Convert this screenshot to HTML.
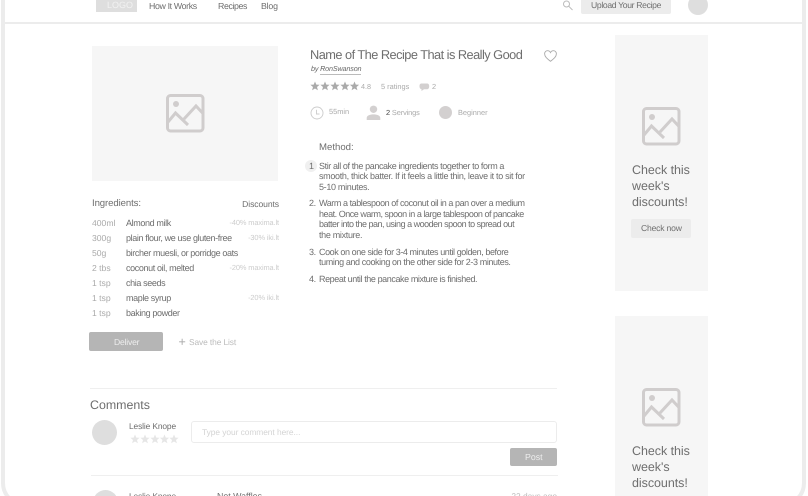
<!DOCTYPE html>
<html><head><meta charset="utf-8">
<style>
html,body{margin:0;padding:0;background:#fff;overflow:hidden;width:808px;height:496px}
#w{width:808px;height:496px;overflow:hidden;position:relative;font-family:"Liberation Sans",sans-serif;color:#666;background:#fff;text-rendering:geometricPrecision}
#f{position:absolute;left:0;top:0;width:808px;height:496px;filter:blur(.3px)}
.a{position:absolute;white-space:nowrap;line-height:1}
.b{position:absolute}
.n{font-size:9px;color:#6e6e6e;letter-spacing:-.38px}
.q{font-size:8.6px;color:#aaa}
.d{font-size:7.4px;color:#ccc;right:529px;letter-spacing:-.1px}
.m{font-size:9px;color:#6e6e6e;letter-spacing:-.32px}
.h{font-size:12.5px;color:#6e6e6e;line-height:16px;letter-spacing:-.05px}
svg{position:absolute;overflow:visible}
</style></head><body>
<div id="w"><div id="f">
<div class="b" style="left:1px;top:-30px;width:797px;height:529px;border:4px solid #ececec;border-radius:24px"></div>
<div class="b" style="left:5px;top:22px;width:798px;height:2px;background:#ececec"></div>

<div class="b" style="left:96px;top:0;width:41px;height:12px;background:#dedede"></div>
<div class="a" style="left:107px;top:1px;font-size:9px;color:#f2f2f2">LOGO</div>
<div class="a" style="left:149px;top:2px;font-size:8.800px;letter-spacing:-.36px;color:#6e6e6e">How It Works</div>
<div class="a" style="left:218px;top:2px;font-size:8.800px;letter-spacing:-.4px;color:#6e6e6e">Recipes</div>
<div class="a" style="left:261px;top:2px;font-size:8.800px;letter-spacing:-.2px;color:#6e6e6e">Blog</div>
<svg style="left:562px;top:0" width="12" height="11" viewBox="0 0 12 11" fill="none" stroke="#bbb" stroke-width="1"><circle cx="4.500" cy="4" r="3"/><path d="M6.800 6.300L10.500 10"/></svg>
<div class="b" style="left:581px;top:0;width:90px;height:14px;background:#ececec;border-radius:0 0 2px 2px"></div>
<div class="a" style="left:591px;top:1px;font-size:8.600px;letter-spacing:-.33px;color:#6e6e6e">Upload Your Recipe</div>
<div class="b" style="left:688px;top:-5px;width:20px;height:20px;border-radius:50%;background:#dedede"></div>

<div class="b" style="left:92px;top:46px;width:186px;height:135px;background:#f6f6f6"></div>
<svg style="left:166px;top:94px" width="39" height="39" viewBox="0 0 39 39" fill="none" stroke="#d0cdcd" stroke-width="3"><rect x="1.500" y="1.500" width="35.500" height="35.500" rx="3"/><circle cx="10" cy="10" r="3" fill="#d0cdcd" stroke="none"/><path d="M2 28L9.500 19L22 31M18 25L30 12L37.500 20"/></svg>

<div class="a" style="left:310px;top:49px;font-size:12.800px;letter-spacing:-.54px;color:#6e6e6e">Name of The Recipe That is Really Good</div>
<svg style="left:544px;top:50px" width="13" height="12" viewBox="0 0 13 12" fill="none" stroke="#aaa" stroke-width="0.9"><path d="M6.500 11.300C3 8.500.6 6.600.6 3.800.6 2 2 .7 3.500.7 4.800.7 5.900 1.400 6.500 2.600 7.100 1.400 8.200.7 9.500.7 11 .7 12.400 2 12.400 3.800 12.400 6.600 10 8.500 6.500 11.300Z"/></svg>
<div class="a" style="left:311px;top:65px;font-size:7.200px;letter-spacing:-.15px;font-style:italic;color:#666">by <span style="border-bottom:1px solid #bbb;padding-bottom:1px">RonSwanson</span></div>

<svg style="left:310px;top:81px" width="50" height="10" viewBox="0 0 50 10" fill="#aaa">
<polygon points="5,.5 6.300,3.600 9.600,3.800 7,6 7.900,9.300 5,7.500 2.100,9.300 3,6 .4,3.800 3.700,3.600"/>
<polygon transform="translate(10,0)" points="5,.5 6.300,3.600 9.600,3.800 7,6 7.900,9.300 5,7.500 2.100,9.300 3,6 .4,3.800 3.700,3.600"/>
<polygon transform="translate(20,0)" points="5,.5 6.300,3.600 9.600,3.800 7,6 7.900,9.300 5,7.500 2.100,9.300 3,6 .4,3.800 3.700,3.600"/>
<polygon transform="translate(30,0)" points="5,.5 6.300,3.600 9.600,3.800 7,6 7.900,9.300 5,7.500 2.100,9.300 3,6 .4,3.800 3.700,3.600"/>
<polygon transform="translate(39.500,0)" points="5,.5 6.300,3.600 9.600,3.800 7,6 7.900,9.300 5,7.500 2.100,9.300 3,6 .4,3.800 3.700,3.600"/>
</svg>
<div class="a" style="left:361px;top:83px;font-size:7.200px;color:#aaa">4.8</div>
<div class="a" style="left:381px;top:83px;font-size:7.400px;color:#aaa">5 ratings</div>
<svg style="left:419px;top:83px" width="11" height="9" viewBox="0 0 11 9" fill="#d3d0d0"><path d="M2.500.5H8C9.500.5 10.200 1.500 10.200 3.200S9.500 6.200 8 6.200H5L2.500 8V6.200C1 6 .5 5 .5 3.300S1 .5 2.500.5Z"/></svg>
<div class="a" style="left:432px;top:83px;font-size:7.400px;color:#aaa">2</div>

<svg style="left:310px;top:106px" width="14" height="14" viewBox="0 0 14 14" fill="none" stroke="#ccc" stroke-width="0.9"><circle cx="7" cy="7" r="6"/><path d="M6.500 3.800V8H9.500"/></svg>
<div class="a" style="left:329px;top:108px;font-size:7.400px;color:#aaa">55min</div>
<svg style="left:366px;top:105px" width="15" height="15" viewBox="0 0 15 15" fill="#d3d0d0"><circle cx="7.500" cy="4.300" r="3.700"/><path d="M.7 15V13C.7 10.500 4 9.400 7.500 9.400S14.300 10.500 14.300 13V15Z"/></svg>
<div class="a" style="left:386px;top:109px;font-size:7.400px;letter-spacing:-.12px;color:#aaa"><span style="color:#444">2</span> Servings</div>
<div class="b" style="left:439px;top:106px;width:13px;height:13px;border-radius:50%;background:#d3d0d0"></div>
<div class="a" style="left:458px;top:109px;font-size:7.400px;color:#aaa">Beginner</div>

<div class="a" style="left:319px;top:143px;font-size:9.600px;color:#6e6e6e">Method:</div>
<div class="b" style="left:305px;top:160px;width:12px;height:12px;border-radius:50%;background:#f0f0f0"></div>
<div class="a m" style="left:309px;top:162px">1</div>
<div class="a m" style="left:319px;top:162px;letter-spacing:-.4px">Stir all of the pancake ingredients together to form a</div>
<div class="a m" style="left:319px;top:172px">smooth, thick batter. If it feels a little thin, leave it to sit for</div>
<div class="a m" style="left:319px;top:183px">5-10 minutes.</div>
<div class="a m" style="left:309px;top:199px">2.</div>
<div class="a m" style="left:319px;top:199px;letter-spacing:-.44px">Warm a tablespoon of coconut oil in a pan over a medium</div>
<div class="a m" style="left:319px;top:210px;letter-spacing:-.47px">heat. Once warm, spoon in a large tablespoon of pancake</div>
<div class="a m" style="left:319px;top:220px;letter-spacing:-.5px">batter into the pan, using a wooden spoon to spread out</div>
<div class="a m" style="left:319px;top:231px">the mixture.</div>
<div class="a m" style="left:309px;top:248px">3.</div>
<div class="a m" style="left:319px;top:248px;letter-spacing:-.42px">Cook on one side for 3-4 minutes until golden, before</div>
<div class="a m" style="left:319px;top:258px;letter-spacing:-.4px">turning and cooking on the other side for 2-3 minutes.</div>
<div class="a m" style="left:309px;top:275px">4.</div>
<div class="a m" style="left:319px;top:275px;letter-spacing:-.41px">Repeat until the pancake mixture is finished.</div>

<div class="a" style="left:92px;top:199px;font-size:9.600px;letter-spacing:-.1px;color:#6e6e6e">Ingredients:</div>
<div class="a" style="right:529px;top:200px;font-size:8.600px;letter-spacing:-.1px;color:#6e6e6e">Discounts</div>
<div class="a q" style="left:92px;top:219px">400ml</div><div class="a n" style="left:126px;top:219px">Almond milk</div><div class="a d" style="top:219px">-40% maxima.lt</div>
<div class="a q" style="left:92px;top:234px">300g</div><div class="a n" style="left:126px;top:234px">plain flour, we use gluten-free</div><div class="a d" style="top:234px">-30% iki.lt</div>
<div class="a q" style="left:92px;top:249px">50g</div><div class="a n" style="left:126px;top:249px">bircher muesli, or porridge oats</div>
<div class="a q" style="left:92px;top:264px">2 tbs</div><div class="a n" style="left:126px;top:264px">coconut oil, melted</div><div class="a d" style="top:264px">-20% maxima.lt</div>
<div class="a q" style="left:92px;top:279px">1 tsp</div><div class="a n" style="left:126px;top:279px">chia seeds</div>
<div class="a q" style="left:92px;top:294px">1 tsp</div><div class="a n" style="left:126px;top:294px">maple syrup</div><div class="a d" style="top:294px">-20% iki.lt</div>
<div class="a q" style="left:92px;top:309px">1 tsp</div><div class="a n" style="left:126px;top:309px">baking powder</div>

<div class="b" style="left:89px;top:332px;width:74px;height:19px;background:#b5b5b5;border-radius:2px"></div>
<div class="a" style="left:114px;top:338px;font-size:8.600px;letter-spacing:-.2px;color:#eee">Deliver</div>
<div class="a" style="left:178.500px;top:336px;font-size:12.500px;color:#aaa">+</div>
<div class="a" style="left:189px;top:338px;font-size:8.400px;letter-spacing:-.1px;color:#bbb">Save the List</div>

<div class="b" style="left:90px;top:388px;width:467px;height:1px;background:#efefef"></div>
<div class="a" style="left:90px;top:399px;font-size:12.400px;color:#6e6e6e">Comments</div>
<div class="b" style="left:92px;top:420px;width:25px;height:25px;border-radius:50%;background:#dedede"></div>
<div class="a" style="left:129px;top:422px;font-size:8.400px;letter-spacing:-.12px;color:#6e6e6e">Leslie Knope</div>
<svg style="left:130px;top:434px" width="50" height="10" viewBox="0 0 50 10" fill="#e6e6e6">
<polygon points="5,.5 6.300,3.600 9.600,3.800 7,6 7.900,9.300 5,7.500 2.100,9.300 3,6 .4,3.800 3.700,3.600"/>
<polygon transform="translate(10,0)" points="5,.5 6.300,3.600 9.600,3.800 7,6 7.900,9.300 5,7.500 2.100,9.300 3,6 .4,3.800 3.700,3.600"/>
<polygon transform="translate(20,0)" points="5,.5 6.300,3.600 9.600,3.800 7,6 7.900,9.300 5,7.500 2.100,9.300 3,6 .4,3.800 3.700,3.600"/>
<polygon transform="translate(29.500,0)" points="5,.5 6.300,3.600 9.600,3.800 7,6 7.900,9.300 5,7.500 2.100,9.300 3,6 .4,3.800 3.700,3.600"/>
<polygon transform="translate(39,0)" points="5,.5 6.300,3.600 9.600,3.800 7,6 7.900,9.300 5,7.500 2.100,9.300 3,6 .4,3.800 3.700,3.600"/>
</svg>
<div class="b" style="left:191px;top:421px;width:364px;height:20px;border:1px solid #ececec;border-radius:3px"></div>
<div class="a" style="left:202px;top:428px;font-size:8.400px;letter-spacing:-.05px;color:#d4d4d4">Type your comment here...</div>
<div class="b" style="left:510px;top:448px;width:47px;height:18px;background:#b5b5b5;border-radius:2px"></div>
<div class="a" style="left:525px;top:453px;font-size:8.800px;color:#eee">Post</div>
<div class="b" style="left:91px;top:475px;width:467px;height:1px;background:#efefef"></div>
<div class="b" style="left:93px;top:490px;width:25px;height:25px;border-radius:50%;background:#dedede"></div>
<div class="a" style="left:129px;top:492px;font-size:8.400px;letter-spacing:-.12px;color:#6e6e6e">Leslie Knope</div>
<div class="a" style="left:217px;top:492px;font-size:8.800px;color:#6e6e6e">Not Waffles</div>
<div class="a" style="right:251px;top:492px;font-size:8.400px;color:#bbb">22 days ago</div>

<div class="b" style="left:615px;top:35px;width:93px;height:256px;background:#f6f6f6"></div>
<svg style="left:642px;top:106.500px" width="39" height="39" viewBox="0 0 39 39" fill="none" stroke="#d0cdcd" stroke-width="3"><rect x="1.500" y="1.500" width="35.500" height="35.500" rx="3"/><circle cx="10" cy="10" r="3" fill="#d0cdcd" stroke="none"/><path d="M2 28L9.500 19L22 31M18 25L30 12L37.500 20"/></svg>
<div class="a h" style="left:632px;top:162px">Check this<br>week's<br>discounts!</div>
<div class="b" style="left:631px;top:219px;width:60px;height:19px;background:#ececec;border-radius:2px"></div>
<div class="a" style="left:641px;top:224px;font-size:8.600px;letter-spacing:-.2px;color:#6e6e6e">Check now</div>

<div class="b" style="left:615px;top:316px;width:93px;height:180px;background:#f6f6f6"></div>
<svg style="left:642px;top:387.500px" width="39" height="39" viewBox="0 0 39 39" fill="none" stroke="#d0cdcd" stroke-width="3"><rect x="1.500" y="1.500" width="35.500" height="35.500" rx="3"/><circle cx="10" cy="10" r="3" fill="#d0cdcd" stroke="none"/><path d="M2 28L9.500 19L22 31M18 25L30 12L37.500 20"/></svg>
<div class="a h" style="left:632px;top:443px">Check this<br>week's<br>discounts!</div>
</div></div>
</body></html>
